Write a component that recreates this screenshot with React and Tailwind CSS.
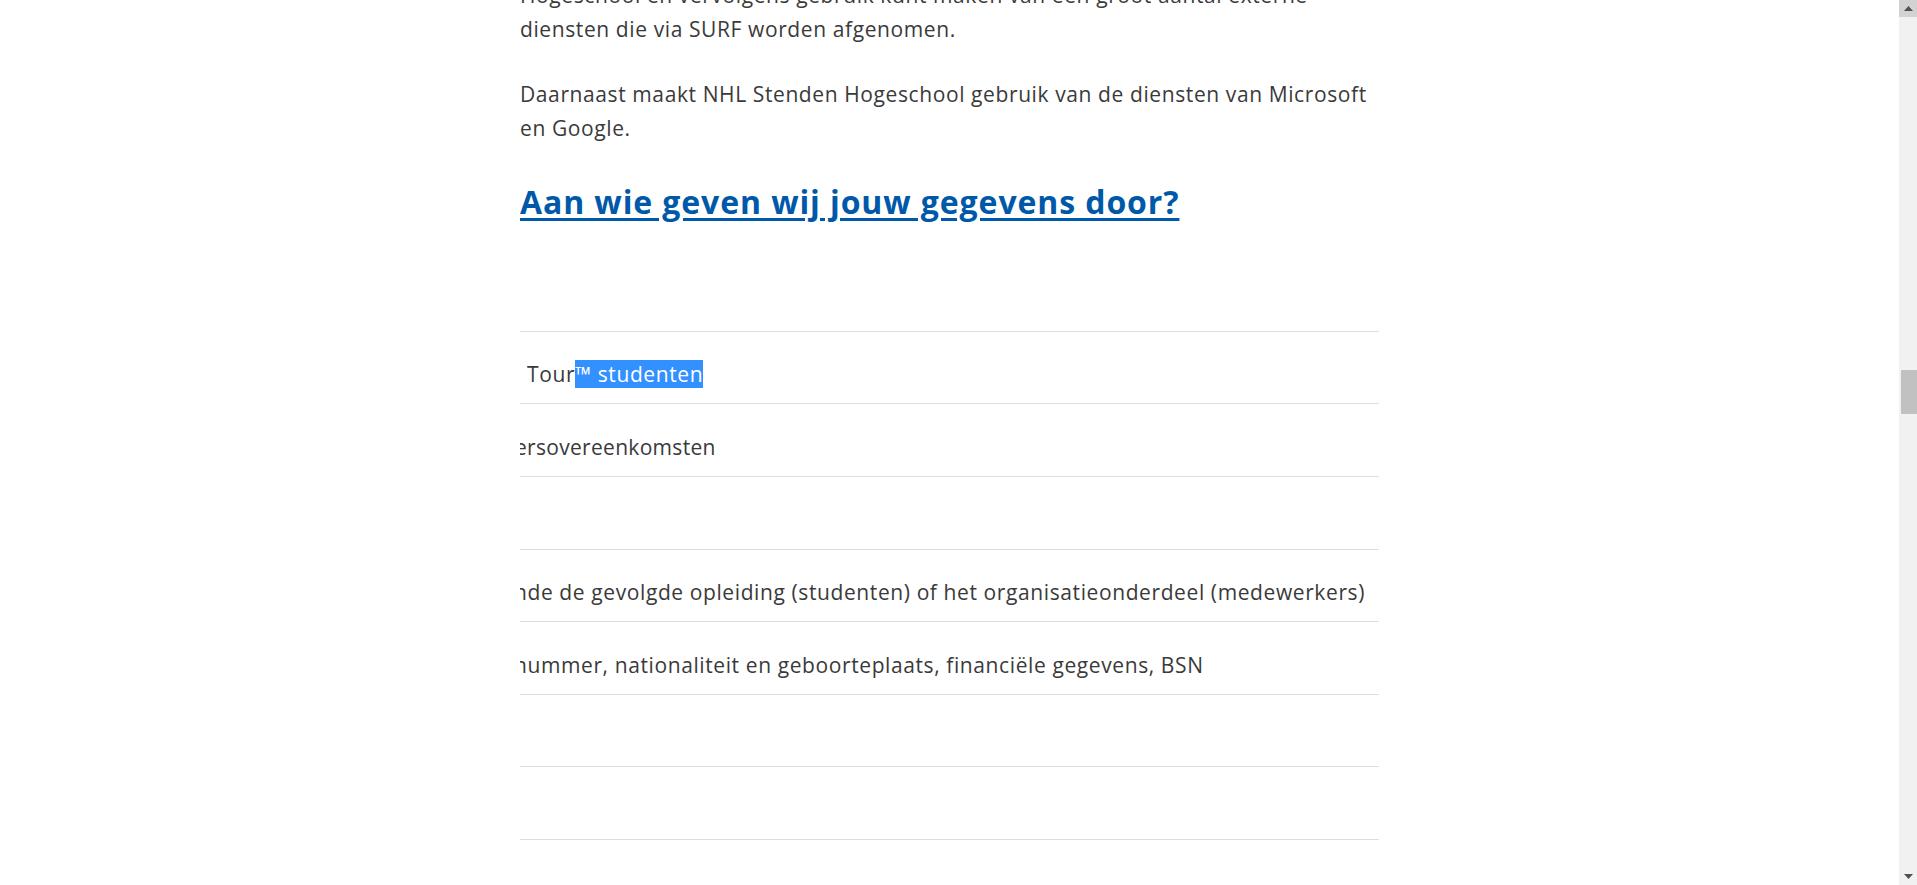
import React from "react";

const font = { fontFamily: '"Open Sans", "Noto Sans", sans-serif' };

function Row({ children }) {
  return (
    <div className="h-[72.6px] border-t border-[#dedede] pt-[25.5px] overflow-hidden whitespace-nowrap text-[21px] leading-[34px] tracking-[0.6px] text-[#3a3a3a]">
      {children}
    </div>
  );
}

export default function App() {
  return (
    <div className="flex h-[885px] w-full overflow-hidden bg-white" style={font}>
      <div className="flex-1 overflow-hidden">
        <div className="mx-auto w-[859px] -mt-[22px]">
          <p className="mb-[30.5px] whitespace-nowrap text-[21px] leading-[34px] tracking-[0.6px] text-[#3a3a3a]">
            Hogeschool en vervolgens gebruik kunt maken van een groot aantal externe
            <br />
            diensten die via SURF worden afgenomen.
          </p>
          <p className="whitespace-nowrap text-[21px] leading-[34px] tracking-[0.6px] text-[#3a3a3a]">
            Daarnaast maakt NHL Stenden Hogeschool gebruik van de diensten van Microsoft
            <br />
            en Google.
          </p>
          <h2 className="mt-[38px] text-[32px] leading-[38px] font-bold tracking-[0.9px] text-[#0059a8]">
            <a href="#" className="underline decoration-[3px] underline-offset-[4px]">
              Aan wie geven wij jouw gegevens door?
            </a>
          </h2>
          <div className="mt-[110.4px]">
            <Row>
              <span className="ml-[7px]">Tour</span>
              <span className="bg-[#3390ff] text-white">™ studenten</span>
            </Row>
            <Row>
              <span className="inline-block -ml-[5px] tracking-[0.3px]">ersovereenkomsten</span>
            </Row>
            <Row />
            <Row>
              <span className="inline-block -ml-[6px]">
                nde de gevolgde opleiding (studenten) of het organisatieonderdeel (medewerkers)
              </span>
            </Row>
            <Row>
              <span className="inline-block -ml-[6px]">
                nummer, nationaliteit en geboorteplaats, financiële gegevens, BSN
              </span>
            </Row>
            <Row />
            <Row />
            <Row />
          </div>
        </div>
      </div>
      <div className="flex w-[18px] shrink-0 flex-col bg-[#f1f1f1]">
        <div className="flex h-[17px] items-center justify-center bg-[#d2d2d2]">
          <svg width="9" height="5" viewBox="0 0 9 5">
            <path d="M0 5 L4.5 0 L9 5 Z" fill="#505050" />
          </svg>
        </div>
        <div className="relative flex-1">
          <div className="absolute left-[2px] right-0 top-[353px] h-[44px] bg-[#c1c1c1]" />
        </div>
        <div className="flex h-[17px] items-center justify-center">
          <svg width="9" height="5" viewBox="0 0 9 5">
            <path d="M0 0 L9 0 L4.5 5 Z" fill="#505050" />
          </svg>
        </div>
      </div>
    </div>
  );
}
